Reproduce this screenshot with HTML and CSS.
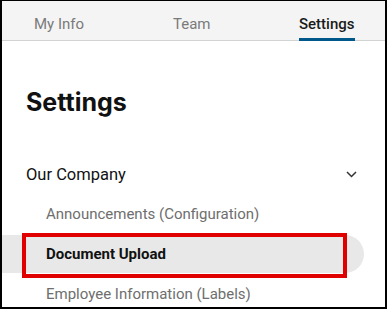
FILE: index.html
```html
<!DOCTYPE html>
<html lang="en">
<head>
  <meta charset="UTF-8">
  <meta name="viewport" content="width=device-width, initial-scale=1.0">
  <title>Settings</title>
  <link rel="stylesheet" href="styles.css">
</head>
<body>

<div class="frame">
  <!-- Abas do topo -->
  <nav class="tabs">
    <a class="tab">My Info</a>
    <a class="tab">Team</a>
    <a class="tab active">Settings</a>
  </nav>

  <div class="content">
    <h1 class="page-title">Settings</h1>

    <div class="group-header">
      <span>Our Company</span>
      <svg class="chevron" width="11" height="7" viewBox="0 0 11 7">
        <path d="M1 1l4.5 4.5L10 1" fill="none" stroke="#333" stroke-width="1.5"/>
      </svg>
    </div>

    <ul class="menu">
      <li class="menu-item">Announcements (Configuration)</li>
      <li class="menu-item selected">
        Document Upload
        <span class="callout"></span>
      </li>
      <li class="menu-item">Employee Information (Labels)</li>
    </ul>
  </div>
</div>

</body>
</html>
```

FILE: styles.css
```css
html, body {
  margin: 0;
  padding: 0;
}
body {
  font-family: Roboto, "Noto Sans", sans-serif;
  background: #fff;
}
.frame {
  width: 387px;
  height: 309px;
  box-sizing: border-box;
  border: 2px solid #000;
  border-top-width: 1px;
  overflow: hidden;
}
/* Barra de abas */
.tabs {
  display: grid;
  grid-template-columns: 139px 126px auto;
  padding-left: 32px;
  height: 40px;
  background: #f4f4f4;
  border-bottom: 1px solid #d2d2d2;
  box-sizing: border-box;
}
.tab {
  position: relative;
  display: flex;
  align-items: center;
  font-size: 15px;
  color: #7a7a7a;
  padding-top: 7px;
}
.tab.active {
  color: #1a1a1a;
  font-weight: 500;
  justify-self: start;
}
.tab.active::after {
  content: "";
  position: absolute;
  left: 0;
  right: 0;
  bottom: -1px;
  height: 3px;
  background: #00578a;
}
.content {
  padding-top: 46px;
}
.page-title {
  margin: 0 0 0 24px;
  font-family: Inter, Roboto, sans-serif;
  font-size: 25px;
  font-weight: 700;
  line-height: 30px;
  color: #111;
}
.group-header {
  display: flex;
  align-items: center;
  justify-content: space-between;
  margin: 44px 28px 0 24px;
  height: 26px;
  font-size: 16.5px;
  color: #111;
}
.menu {
  list-style: none;
  margin: 8px 0 0 0;
  padding: 0;
  display: flex;
  flex-direction: column;
  gap: 2px;
}
.menu-item {
  position: relative;
  height: 38px;
  display: flex;
  align-items: center;
  padding-left: 44px;
  width: 362px;
  box-sizing: border-box;
  font-size: 15px;
  color: #6e6e6e;
}
.menu-item.selected {
  background: #e8e8e8;
  border-radius: 0 19px 19px 0;
  color: #111;
  font-weight: 700;
}
/* Destaque vermelho por cima do item */
.callout {
  position: absolute;
  top: -2px;
  left: 20px;
  width: 325px;
  height: 45px;
  box-sizing: border-box;
  border: 4px solid #e00000;
}
```
